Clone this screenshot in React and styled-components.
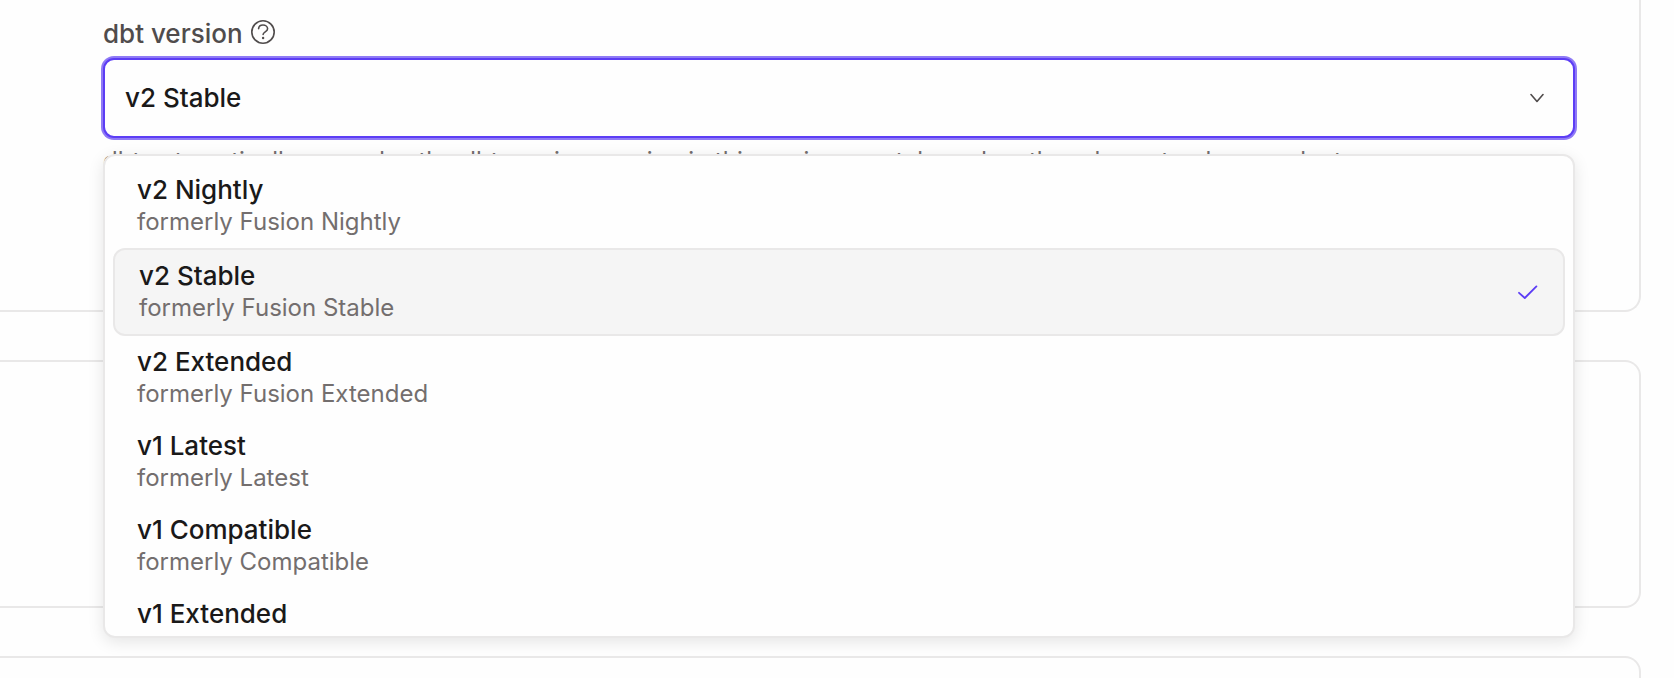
import React from "react";
import styled, { createGlobalStyle } from "styled-components";

const GlobalStyle = createGlobalStyle`
  *, *::before, *::after { box-sizing: border-box; }
  html, body { margin: 0; padding: 0; background: #fefefe; overflow: hidden; }
  body { font-family: Inter, "Liberation Sans", sans-serif; color: #1a1919; -webkit-font-smoothing: antialiased; }
`;

const Page = styled.main`
  width: 1674px;
  height: 678px;
  overflow: hidden;
  display: flex;
  flex-direction: column;
  gap: 48px;
  padding-right: 33px;
`;

const Card = styled.section`
  flex: none;
  height: ${(p) => p.$height}px;
  border: 2px solid #e9e8e8;
  border-left: 0;
  border-top-width: ${(p) => (p.$openTop ? 0 : 2)}px;
  border-radius: 0 ${(p) => (p.$openTop ? 0 : 16)}px 16px 0;
  padding: ${(p) => (p.$openTop ? "16px 64px 0 103px" : "0")};
`;

const Field = styled.div`
  position: relative;
  display: flex;
  flex-direction: column;
`;

const Label = styled.div`
  display: flex;
  align-items: center;
  gap: 8px;
  height: 36px;
  margin-bottom: 6px;
  font-size: 26px;
  font-weight: 500;
  line-height: 36px;
  color: #504c4c;
`;

const HelpIcon = styled.svg`
  width: 24px;
  height: 24px;
  margin-top: -4px;
`;

const Control = styled.div`
  display: flex;
  align-items: center;
  justify-content: space-between;
  height: 80px;
  padding: 0 29px 0 20px;
  border: 2px solid #5c3df5;
  border-radius: 11px;
  box-shadow: 0 0 0 2px #8f7af5;
  background: #fefefe;
  font-size: 26px;
  font-weight: 500;
  line-height: 32px;
`;

const Chevron = styled.svg`
  width: 14px;
  height: 10px;
`;

const Hint = styled.p`
  margin: 7px 0 0;
  font-size: 24px;
  line-height: 31px;
  white-space: nowrap;
  color: #736e6e;
`;

const Menu = styled.div`
  position: absolute;
  top: 138px;
  left: 0;
  right: 0;
  height: 484px;
  padding: 8px;
  overflow: hidden;
  border: 2px solid #e9e8e8;
  border-radius: 12px;
  background: #fefefe;
  box-shadow: 0 4px 16px rgba(0, 0, 0, 0.1);
`;

const Option = styled.div`
  display: flex;
  align-items: center;
  justify-content: space-between;
  padding: 10px 24px 11px;
  border: ${(p) => (p.$selected ? "2px solid #e9e8e8" : "0")};
  border-radius: 12px;
  background: ${(p) => (p.$selected ? "#f5f5f5" : "transparent")};
`;

const OptionTitle = styled.div`
  font-size: 26px;
  font-weight: 500;
  line-height: 32px;
`;

const OptionNote = styled.div`
  font-size: 24px;
  line-height: 31px;
  color: #736e6e;
`;

const Check = styled.svg`
  width: 20px;
  height: 14px;
  margin-right: 1px;
`;

const options = [
  ["v2 Nightly", "formerly Fusion Nightly"],
  ["v2 Stable", "formerly Fusion Stable"],
  ["v2 Extended", "formerly Fusion Extended"],
  ["v1 Latest", "formerly Latest"],
  ["v1 Compatible", "formerly Compatible"],
  ["v1 Extended", "formerly Extended"],
];

export default function App() {
  const selected = "v2 Stable";
  return (
    <>
      <GlobalStyle />
      <Page>
        <Card $height={312} $openTop>
          <Field>
            <Label>
              <span>dbt version</span>
              <HelpIcon viewBox="0 0 24 24" fill="none" stroke="#504c4c" strokeWidth="1.6" strokeLinecap="round">
                <circle cx="12" cy="12" r="11.2" />
                <path d="M7.6 8.6C7.8 6.4 9.6 5 12 5s4.6 1.5 4.6 3.8c0 3-4.5 3.1-4.5 5.7" />
                <circle cx="12.1" cy="18" r="1.2" fill="#504c4c" stroke="none" />
              </HelpIcon>
            </Label>
            <Control>
              <span>{selected}</span>
              <Chevron viewBox="0 0 14 10" fill="none" stroke="#504c4c" strokeWidth="1.6" strokeLinecap="round" strokeLinejoin="round">
                <path d="M1 1.5l6 7 6-7" />
              </Chevron>
            </Control>
            <Hint>
              dbt automatically upgrades the dbt version running in this environment, based on the release track you select.
            </Hint>
            <Menu>
              {options.map(([title, note]) => (
                <Option key={title} $selected={title === selected}>
                  <div>
                    <OptionTitle>{title}</OptionTitle>
                    <OptionNote>{note}</OptionNote>
                  </div>
                  {title === selected && (
                    <Check viewBox="0 0 20 14" fill="none" stroke="#5c3df5" strokeWidth="1.8" strokeLinecap="round" strokeLinejoin="round">
                      <path d="M1 7.8l5.8 5.2L18.4 1.4" />
                    </Check>
                  )}
                </Option>
              ))}
            </Menu>
          </Field>
        </Card>
        <Card $height={248} />
        <Card $height={100} />
      </Page>
    </>
  );
}
